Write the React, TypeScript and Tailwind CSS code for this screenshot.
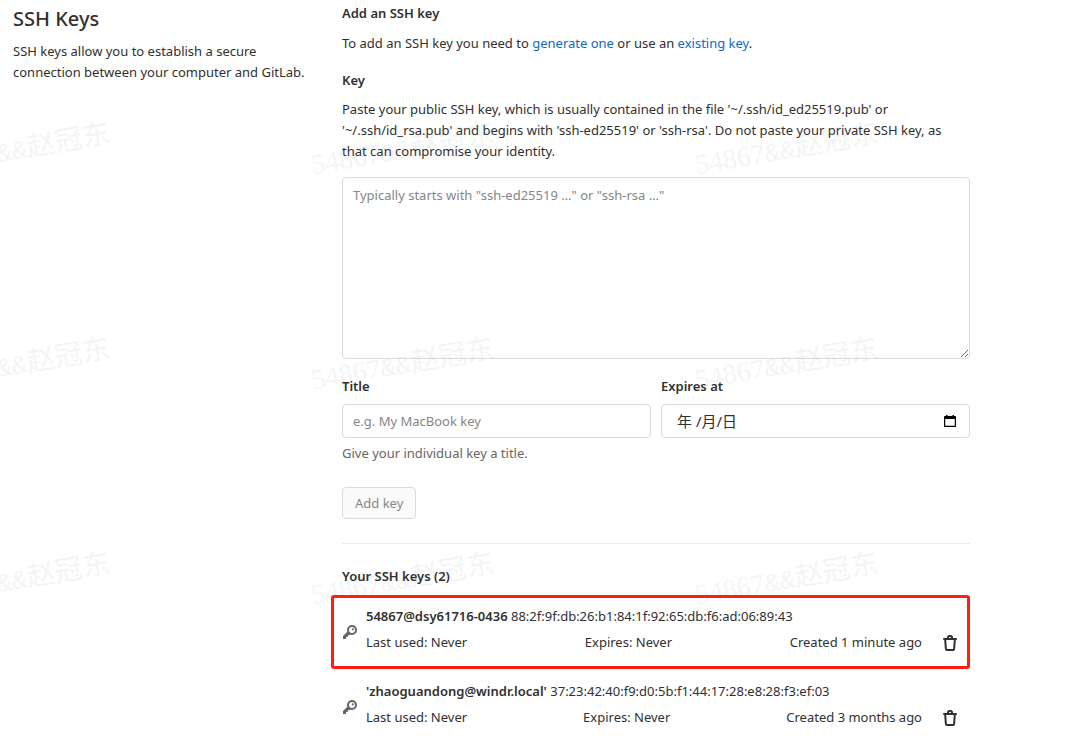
import { useState } from "react";

type SshKey = {
    id: number;
    name: string;
    fingerprint: string;
    created: string;
    highlighted: boolean;
};

const initialKeys: SshKey[] = [
    {
        id: 1,
        name: "54867@dsy61716-0436",
        fingerprint: "88:2f:9f:db:26:b1:84:1f:92:65:db:f6:ad:06:89:43",
        created: "Created 1 minute ago",
        highlighted: true,
    },
    {
        id: 2,
        name: "'zhaoguandong@windr.local'",
        fingerprint: "37:23:42:40:f9:d0:5b:f1:44:17:28:e8:28:f3:ef:03",
        created: "Created 3 months ago",
        highlighted: false,
    },
];

const watermarkCells = Array.from({ length: 9 }, (_, index) => index);

function KeyIcon() {
    return (
        <svg viewBox="0 0 16 16" className="mb-0.5 h-4 w-4 shrink-0" aria-hidden="true">
            <circle cx="10" cy="6" r="4" fill="none" stroke="#666" strokeWidth="2" />
            <circle cx="10.8" cy="5.3" r="1.1" fill="#666" />
            <path fill="#666" d="M6 7 1 12v3h3v-1.9h1.8v-1.8h1.4L9 10z" />
        </svg>
    );
}

function TrashIcon() {
    return (
        <svg viewBox="0 0 16 16" className="h-4 w-4 fill-[#303030]" aria-hidden="true">
            <path
                fillRule="evenodd"
                d="M5 3V2.5A2.5 2.5 0 0 1 7.5 0h1A2.5 2.5 0 0 1 11 2.5V3h3a1 1 0 1 1 0 2h-.2l-.7 9.1A2 2 0 0 1 11.1 16H4.9a2 2 0 0 1-2-1.9L2.2 5H2a1 1 0 0 1 0-2h3zm2 0h2v-.5a.5.5 0 0 0-.5-.5h-1a.5.5 0 0 0-.5.5V3zM4.2 5l.7 9h6.2l.7-9H4.2z"
            />
        </svg>
    );
}

function CalendarIcon() {
    return (
        <svg viewBox="0 0 14 14" className="h-3.5 w-3.5 fill-black" aria-hidden="true">
            <path fillRule="evenodd" d="M3 1h1.5v1h5V1H11v1h1c.6 0 1 .4 1 1v9c0 .6-.4 1-1 1H2c-.6 0-1-.4-1-1V3c0-.6.4-1 1-1h1V1zM2.2 5v6.8h9.6V5H2.2z" />
        </svg>
    );
}

function Watermark() {
    return (
        <div
            className="pointer-events-none absolute inset-0 z-10 overflow-hidden opacity-5"
            aria-hidden="true"
        >
            <div className="-ml-[74px] mt-[129px] grid grid-cols-[384px_384px_384px] auto-rows-[215px]">
                {watermarkCells.map((cell) => (
                    <div
                        key={cell}
                        className="flex h-10 w-[190px] -rotate-10 items-baseline font-['Liberation_Serif','Noto_Sans_CJK_SC',serif] text-[28px] leading-10 whitespace-nowrap text-[#33475b]"
                    >
                        <span>54867</span>
                        <span className="font-['Liberation_Mono',monospace] text-[26px]">&amp;&amp;</span>
                        <span>赵冠东</span>
                    </div>
                ))}
            </div>
        </div>
    );
}

type KeyRowProps = {
    sshKey: SshKey;
    onDelete: (id: number) => void;
};

function KeyRow({ sshKey, onDelete }: KeyRowProps) {
    return (
        <li className="relative flex h-[75px] items-center">
            {sshKey.highlighted ? (
                <div className="pointer-events-none absolute top-0 right-0 bottom-px -left-[11px] z-20 rounded-[3px] border-3 border-[#ff1e12]" />
            ) : null}
            <KeyIcon />
            <div className="mb-[7px] ml-2 flex-1">
                <p>
                    <strong className="font-semibold">{sshKey.name}</strong> {sshKey.fingerprint}
                </p>
                <div className="mt-[5px] flex justify-between">
                    <span>Last used: Never</span>
                    <span>Expires: Never</span>
                    <span>{sshKey.created}</span>
                </div>
            </div>
            <button
                type="button"
                aria-label="Delete"
                onClick={() => onDelete(sshKey.id)}
                className="mt-5 ml-2 flex h-8 w-10 items-center justify-center"
            >
                <TrashIcon />
            </button>
        </li>
    );
}

export default function App() {
    const [keys, setKeys] = useState(initialKeys);
    const [key, setKey] = useState("");
    const [title, setTitle] = useState("");
    const [expiresAt, setExpiresAt] = useState("");

    const handleDelete = (id: number) => setKeys(keys.filter((item) => item.id !== id));

    return (
        <div className="relative min-h-screen overflow-hidden bg-white font-['Noto_Sans','Noto_Sans_CJK_SC',sans-serif] text-[13px] leading-[21px] text-[#303030]">
            <Watermark />
            <main className="grid max-w-[970px] grid-cols-[299fr_628fr] gap-[30px] pl-[13px]">
                <section>
                    <h1 className="mt-[5px] text-xl font-medium">SSH Keys</h1>
                    <p className="mt-2">
                        SSH keys allow you to establish a secure connection between your computer and GitLab.
                    </p>
                </section>

                <section>
                    <h2 className="mt-[3px] font-semibold">Add an SSH key</h2>
                    <p className="mt-[9px]">
                        To add an SSH key you need to{" "}
                        <a href="#generate" className="text-[#1068bf]">generate one</a> or use an{" "}
                        <a href="#existing" className="text-[#1068bf]">existing key</a>.
                    </p>

                    <form onSubmit={(event) => event.preventDefault()}>
                        <label htmlFor="key" className="mt-4 block font-semibold">Key</label>
                        <p className="mt-2 pr-3">
                            Paste your public SSH key, which is usually contained in the file '~/.ssh/id_ed25519.pub' or
                            '~/.ssh/id_rsa.pub' and begins with 'ssh-ed25519' or 'ssh-rsa'. Do not paste your private
                            SSH key, as that can compromise your identity.
                        </p>
                        <textarea
                            id="key"
                            value={key}
                            onChange={(event) => setKey(event.target.value)}
                            placeholder={'Typically starts with "ssh-ed25519 …" or "ssh-rsa …"'}
                            className="mt-[15px] block h-[182px] w-full rounded border border-[#dbdbdb] px-2.5 py-[7px] placeholder:text-[#868686]"
                        />

                        <div className="mt-[17px] grid grid-cols-2 gap-2.5">
                            <div>
                                <label htmlFor="title" className="block font-semibold">Title</label>
                                <input
                                    id="title"
                                    type="text"
                                    value={title}
                                    onChange={(event) => setTitle(event.target.value)}
                                    placeholder="e.g. My MacBook key"
                                    className="mt-[7px] h-[34px] w-full rounded border border-[#dbdbdb] px-2.5 placeholder:text-[#868686]"
                                />
                                <p className="mt-[5px] text-[#666]">Give your individual key a title.</p>
                            </div>
                            <div>
                                <label htmlFor="expires" className="block font-semibold">Expires at</label>
                                <div className="mt-[7px] flex h-[34px] items-center rounded border border-[#dbdbdb] pr-3 pl-[15px]">
                                    <input
                                        id="expires"
                                        type="text"
                                        value={expiresAt}
                                        onChange={(event) => setExpiresAt(event.target.value)}
                                        placeholder="年 /月/日"
                                        className="min-w-0 flex-1 text-[15px] placeholder:text-[#303030]"
                                    />
                                    <button type="button" aria-label="Pick a date">
                                        <CalendarIcon />
                                    </button>
                                </div>
                            </div>
                        </div>

                        <button
                            type="submit"
                            disabled={!key}
                            className="mt-[23px] h-8 rounded border border-[#dbdbdb] bg-[#fafafa] px-3 disabled:text-[#868686]"
                        >
                            Add key
                        </button>
                    </form>

                    <hr className="mt-6 border-[#eaeaea]" />
                    <h2 className="mt-[22px] font-semibold">Your SSH keys ({keys.length})</h2>
                    <ul className="mt-2">
                        {keys.map((sshKey) => (
                            <KeyRow key={sshKey.id} sshKey={sshKey} onDelete={handleDelete} />
                        ))}
                    </ul>
                </section>
            </main>
        </div>
    );
}
